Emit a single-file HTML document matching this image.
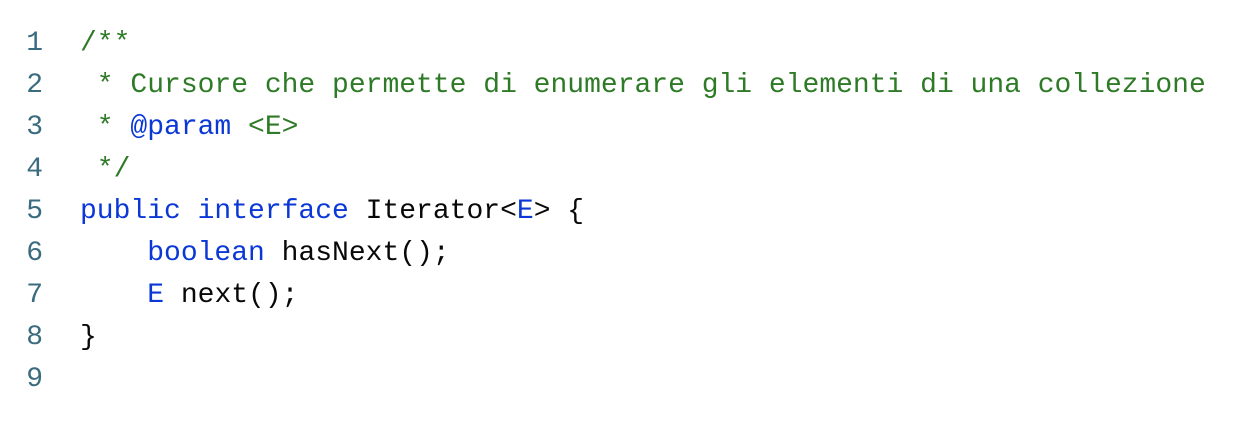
<!DOCTYPE html>
<html><head><meta charset="utf-8"><style>
html,body{margin:0;padding:0;background:#fff;width:1246px;height:426px;overflow:hidden}
.w{position:absolute;top:23px;left:0;font-family:"Liberation Mono",monospace;font-size:28px;line-height:42px;white-space:pre}
.n{position:absolute;left:0;width:43px;text-align:right;color:#3a6b7e}
.c{position:absolute;left:80px;color:#080808}
.g{color:#2e7a27}.b{color:#0a37d6}
</style></head><body>
<div class="w"><div class="n">1
2
3
4
5
6
7
8
9</div><div class="c"><span class="g">/**
 * Cursore che permette di enumerare gli elementi di una collezione
 * </span><span class="b">@param</span><span class="g"> &lt;E&gt;
 */</span>
<span class="b">public interface</span> Iterator&lt;<span class="b">E</span>&gt; {
    <span class="b">boolean</span> hasNext();
    <span class="b">E</span> next();
}
</div></div>
</body></html>
